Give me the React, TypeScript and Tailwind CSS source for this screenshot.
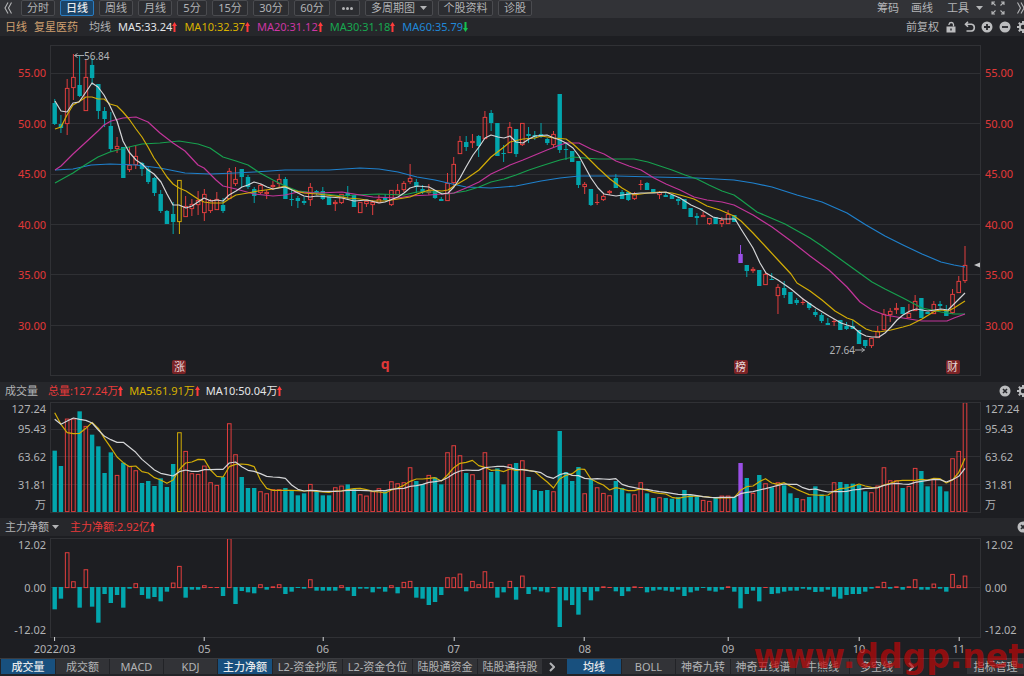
import {useState} from "react";
import clsx from "clsx";

type Kind = "D" | "U" | "Y" | "P";
type Candle = [Kind, number, number, number, number];
type Point = [number, number];

const TEAL = "#02a6ad";
const RED = "#e23e3e";
const YELLOW = "#d2ac06";
const PURPLE = "#9a4fe6";
const WHITE = "#d4d5d7";
const MAGENTA = "#c2359a";
const GREEN = "#17a04e";
const BLUE = "#1f80cc";

const colors: Record<Kind, string> = {D: TEAL, U: RED, Y: YELLOW, P: PURPLE};

// kind, body top, body bottom, high, low
const candles: Candle[] = [
    ["D", 103, 124, 99, 125], ["D", 124, 128, 115, 133], ["U", 88, 124, 79, 135], ["U", 77, 88, 54, 100], ["D", 85, 96, 56, 97],
    ["U", 77, 111, 60, 111], ["D", 65, 78, 58, 85], ["D", 84, 111, 84, 119], ["D", 111, 119, 107, 127], ["D", 126, 149, 112, 152],
    ["U", 146, 149, 137, 153], ["D", 147, 178, 147, 178], ["U", 165, 170, 147, 172], ["U", 156, 165, 146, 169], ["D", 163, 169, 162, 176],
    ["D", 169, 182, 166, 184], ["D", 178, 193, 177, 196], ["D", 194, 211, 190, 213], ["D", 211, 224, 210, 224], ["D", 214, 222, 202, 234],
    ["Y", 180, 222, 180, 234], ["U", 206, 217, 196, 217], ["U", 204, 209, 199, 216], ["U", 200, 205, 191, 215], ["U", 194, 213, 189, 221],
    ["U", 200, 211, 199, 213], ["U", 199, 210, 192, 210], ["D", 205, 211, 198, 213], ["U", 171, 199, 168, 199], ["U", 179, 184, 167, 186],
    ["D", 169, 177, 169, 187], ["D", 177, 187, 175, 189], ["D", 189, 196, 187, 203], ["U", 185, 193, 184, 194], ["U", 192, 194, 190, 199],
    ["U", 185, 187, 181, 190], ["U", 179, 184, 174, 187], ["D", 179, 199, 177, 199], ["D", 199, 200, 190, 206], ["D", 198, 201, 196, 208],
    ["D", 201, 203, 197, 205], ["U", 187, 200, 183, 206], ["D", 191, 193, 190, 195], ["D", 191, 199, 187, 200], ["D", 197, 205, 197, 205],
    ["U", 202, 204, 200, 211], ["U", 194, 203, 194, 204], ["D", 193, 196, 186, 200], ["D", 195, 207, 195, 207], ["U", 202, 213, 202, 213],
    ["U", 201, 204, 201, 207], ["U", 202, 205, 200, 215], ["U", 199, 203, 195, 203], ["D", 197, 200, 194, 201], ["U", 190, 205, 190, 206],
    ["U", 190, 195, 184, 195], ["U", 183, 190, 181, 192], ["U", 178, 182, 164, 184], ["D", 182, 187, 179, 193], ["D", 189, 192, 185, 194],
    ["U", 191, 193, 184, 195], ["D", 191, 198, 191, 199], ["D", 199, 201, 197, 201], ["U", 183, 201, 173, 201], ["U", 164, 183, 157, 187],
    ["U", 141, 154, 136, 154], ["D", 142, 147, 136, 151], ["U", 141, 143, 134, 148], ["D", 136, 146, 135, 157], ["U", 117, 139, 111, 139],
    ["D", 113, 123, 110, 131], ["D", 123, 156, 123, 156], ["D", 153, 154, 145, 162], ["U", 127, 153, 122, 153], ["D", 129, 154, 129, 157],
    ["U", 123, 145, 123, 146], ["D", 134, 136, 127, 143], ["D", 135, 137, 131, 140], ["D", 134, 137, 123, 138], ["D", 139, 143, 138, 145],
    ["U", 134, 145, 131, 147], ["D", 94, 150, 94, 153], ["D", 149, 150, 143, 160], ["D", 151, 162, 151, 162], ["D", 161, 185, 161, 188],
    ["U", 184, 187, 182, 194], ["D", 189, 205, 189, 206], ["U", 202, 203, 194, 205], ["U", 196, 200, 194, 201], ["U", 191, 193, 190, 195],
    ["D", 178, 188, 174, 188], ["D", 192, 199, 190, 199], ["D", 192, 200, 192, 201], ["U", 194, 199, 192, 200], ["U", 184, 185, 180, 190],
    ["D", 183, 190, 182, 190], ["D", 189, 192, 189, 192], ["U", 192, 195, 191, 199], ["D", 195, 197, 192, 197], ["D", 195, 199, 195, 199],
    ["D", 199, 201, 197, 205], ["D", 199, 209, 199, 209], ["D", 208, 217, 208, 217], ["D", 216, 218, 213, 225], ["U", 215, 217, 212, 217],
    ["U", 218, 224, 218, 225], ["D", 217, 224, 217, 224], ["U", 220, 224, 217, 227], ["U", 214, 224, 210, 224], ["D", 215, 222, 215, 222],
    ["P", 254, 263, 245, 263], ["D", 265, 271, 265, 277], ["U", 269, 271, 267, 273], ["D", 270, 286, 270, 286], ["U", 274, 285, 272, 285],
    ["D", 279, 280, 273, 280], ["U", 287, 296, 284, 314], ["D", 288, 295, 281, 298], ["D", 292, 304, 292, 304], ["D", 300, 303, 298, 305],
    ["U", 302, 303, 298, 305], ["D", 303, 308, 303, 310], ["D", 312, 315, 309, 317], ["D", 315, 321, 313, 323], ["D", 323, 325, 318, 325],
    ["U", 321, 322, 319, 326], ["D", 320, 330, 320, 330], ["D", 326, 329, 322, 330], ["D", 326, 329, 320, 329], ["D", 330, 344, 330, 344],
    ["D", 340, 346, 340, 348], ["U", 338, 346, 338, 348], ["U", 331, 338, 326, 338], ["U", 314, 330, 309, 330], ["U", 311, 315, 308, 322],
    ["U", 308, 310, 303, 314], ["D", 307, 314, 307, 314], ["U", 313, 318, 304, 318], ["U", 301, 311, 295, 311], ["D", 298, 318, 298, 318],
    ["D", 312, 314, 312, 314], ["U", 304, 314, 301, 314], ["D", 304, 306, 301, 309], ["D", 311, 316, 305, 316], ["U", 294, 313, 289, 314],
    ["U", 281, 293, 276, 293], ["U", 265, 281, 246, 283],
];

const ma5: Point[] = [[55, 101], [61, 111], [67, 112], [73, 103], [79, 102], [86, 92], [92, 83], [98, 87], [104, 95], [110, 106], [117, 121], [123, 141], [129, 152], [136, 160], [142, 164], [148, 170], [154, 174], [161, 182], [167, 194], [173, 205], [179, 205], [186, 208], [192, 206], [198, 202], [204, 198], [211, 201], [217, 200], [223, 201], [229, 195], [236, 191], [242, 187], [248, 185], [254, 182], [261, 184], [267, 187], [273, 189], [279, 188], [285, 187], [292, 190], [298, 193], [304, 196], [310, 197], [317, 196], [329, 197], [342, 198], [354, 201], [367, 200], [379, 203], [385, 202], [398, 197], [404, 193], [410, 188], [417, 186], [429, 187], [442, 194], [448, 193], [454, 187], [460, 178], [466, 167], [473, 155], [479, 147], [485, 138], [491, 135], [498, 137], [504, 138], [510, 136], [516, 142], [523, 143], [529, 139], [535, 136], [547, 135], [554, 138], [560, 140], [566, 143], [573, 148], [579, 156], [585, 167], [591, 178], [598, 188], [604, 194], [616, 196], [629, 194], [641, 193], [654, 193], [666, 192], [680, 198], [691, 205], [700, 209], [713, 217], [722, 219], [735, 219], [741, 229], [753, 248], [760, 263], [766, 273], [778, 280], [791, 289], [803, 299], [816, 308], [829, 316], [841, 323], [853, 327], [860, 333], [866, 336], [872, 337], [879, 337], [885, 333], [891, 327], [897, 320], [903, 315], [910, 311], [916, 309], [928, 311], [941, 309], [948, 310], [954, 304], [960, 298], [965, 293]];
const ma10: Point[] = [[55, 129], [61, 127], [67, 115], [73, 105], [80, 101], [86, 97], [92, 97], [98, 99], [104, 99], [110, 104], [117, 106], [123, 112], [129, 119], [136, 129], [142, 137], [148, 147], [154, 158], [161, 168], [167, 177], [173, 184], [179, 188], [186, 191], [192, 195], [198, 199], [204, 202], [211, 203], [223, 203], [229, 199], [236, 195], [248, 193], [258, 191], [273, 189], [285, 186], [292, 190], [304, 193], [317, 194], [335, 196], [348, 198], [360, 199], [373, 201], [385, 201], [398, 199], [410, 197], [417, 194], [429, 190], [442, 191], [448, 190], [454, 186], [466, 179], [479, 170], [491, 157], [504, 147], [510, 142], [523, 139], [535, 138], [541, 136], [554, 138], [566, 139], [573, 144], [585, 155], [598, 168], [610, 179], [622, 188], [634, 195], [648, 193], [660, 192], [672, 193], [680, 195], [694, 199], [707, 206], [720, 210], [734, 216], [741, 221], [753, 233], [766, 247], [778, 260], [791, 274], [797, 283], [810, 291], [822, 300], [835, 311], [847, 318], [853, 320], [860, 325], [866, 329], [872, 331], [879, 332], [891, 330], [903, 327], [910, 325], [922, 319], [935, 311], [941, 310], [948, 311], [954, 308], [965, 301]];
const ma20: Point[] = [[55, 170], [61, 166], [73, 154], [85, 143], [98, 131], [104, 125], [111, 121], [123, 118], [136, 117], [148, 122], [160, 133], [173, 143], [185, 151], [198, 165], [204, 168], [216, 180], [223, 186], [236, 189], [254, 194], [273, 196], [285, 195], [298, 192], [317, 193], [342, 192], [354, 194], [373, 197], [398, 198], [410, 196], [429, 195], [442, 194], [454, 193], [466, 188], [479, 182], [491, 174], [504, 168], [510, 165], [523, 160], [535, 155], [547, 150], [560, 145], [566, 143], [579, 143], [591, 149], [604, 154], [616, 161], [629, 166], [641, 170], [654, 178], [666, 184], [680, 190], [694, 197], [707, 200], [722, 202], [734, 205], [753, 215], [772, 227], [791, 241], [810, 256], [829, 270], [847, 287], [860, 302], [872, 310], [885, 315], [903, 318], [922, 321], [947, 321], [954, 318], [965, 314]];
const ma30: Point[] = [[55, 183], [73, 173], [85, 165], [98, 157], [110, 152], [129, 147], [142, 144], [160, 143], [179, 141], [198, 144], [210, 148], [223, 157], [236, 161], [248, 165], [260, 173], [273, 180], [285, 186], [298, 191], [317, 193], [342, 196], [354, 195], [379, 194], [404, 195], [417, 192], [435, 192], [448, 194], [466, 191], [479, 187], [491, 182], [504, 179], [516, 175], [529, 170], [541, 166], [560, 160], [573, 157], [585, 158], [598, 159], [616, 159], [634, 159], [648, 162], [660, 166], [672, 170], [685, 175], [697, 179], [709, 185], [722, 191], [734, 195], [741, 200], [757, 212], [785, 224], [810, 238], [822, 246], [847, 264], [872, 282], [885, 289], [903, 298], [922, 308], [941, 312], [954, 314], [965, 314]];
const ma60: Point[] = [[55, 170], [73, 169], [91, 165], [110, 164], [136, 165], [160, 168], [185, 173], [210, 174], [235, 173], [254, 172], [285, 170], [329, 170], [360, 168], [379, 169], [398, 172], [417, 177], [435, 180], [448, 183], [466, 187], [491, 188], [516, 186], [541, 181], [560, 178], [579, 176], [616, 176], [654, 177], [697, 178], [734, 180], [753, 183], [772, 187], [797, 195], [822, 202], [847, 213], [866, 225], [885, 236], [903, 245], [922, 254], [941, 262], [954, 265], [965, 267]];

// levels in thirds of a unit, measured downwards
const volumes = [
    212, 258, 116, 116, 94, 138, 164, 199, 279, 217, 285, 248, 258, 271, 309, 303, 318, 295, 321, 252, 157, 213, 280, 282, 257, 307, 315, 291, 130, 223,
    291, 324, 324, 334, 340, 328, 328, 324, 330, 346, 340, 312, 334, 346, 346, 322, 317, 313, 327, 343, 347, 334, 325, 334, 304, 310, 307, 262, 303, 312,
    285, 292, 313, 217, 196, 226, 279, 283, 300, 217, 276, 265, 313, 253, 249, 241, 291, 330, 333, 330, 334, 153, 276, 303, 261, 340, 297, 322, 339, 346,
    303, 324, 340, 343, 307, 340, 354, 352, 354, 356, 351, 330, 345, 349, 360, 363, 354, 347, 347, 351, 249, 294, 339, 285, 310, 322, 307, 316, 340, 354,
    358, 351, 319, 343, 348, 307, 306, 312, 311, 315, 334, 337, 317, 262, 301, 301, 324, 318, 264, 273, 319, 297, 319, 334, 235, 213, 67,
];
const volMa5 = [
    98, 133, 158, 161, 160, 145, 127, 145, 176, 203, 231, 248, 260, 258, 275, 279, 293, 300, 310, 300, 268, 249, 246, 238, 239, 270, 289, 291, 260, 253,
    252, 254, 260, 300, 325, 331, 331, 331, 331, 332, 333, 331, 334, 336, 337, 333, 333, 329, 326, 325, 329, 334, 336, 339, 330, 324, 316, 304, 297, 297,
    295, 293, 303, 285, 263, 250, 247, 241, 257, 262, 271, 270, 275, 267, 271, 268, 271, 275, 291, 306, 324, 297, 286, 281, 267, 268, 297, 307, 315, 330,
    323, 327, 332, 332, 326, 331, 337, 340, 342, 352, 355, 351, 349, 348, 350, 351, 354, 354, 354, 352, 331, 320, 318, 305, 296, 309, 313, 308, 319, 328,
    336, 344, 345, 346, 345, 333, 326, 324, 319, 312, 318, 322, 323, 315, 310, 303, 301, 301, 301, 298, 300, 295, 296, 309, 300, 277, 235,
];
const volMa10 = [
    118, 133, 123, 114, 118, 121, 129, 150, 169, 179, 187, 187, 202, 217, 238, 254, 270, 280, 284, 288, 275, 270, 274, 274, 269, 269, 268, 268, 249, 246,
    260, 271, 274, 281, 289, 291, 292, 295, 315, 328, 333, 331, 332, 334, 334, 334, 333, 331, 331, 331, 332, 333, 332, 332, 328, 326, 325, 319, 317, 313,
    307, 305, 302, 293, 281, 273, 270, 271, 271, 263, 261, 259, 259, 263, 268, 269, 272, 274, 278, 290, 295, 284, 279, 286, 287, 295, 297, 296, 297, 298,
    296, 313, 319, 323, 327, 328, 332, 335, 337, 340, 343, 344, 344, 347, 350, 352, 353, 352, 352, 352, 341, 337, 335, 330, 326, 321, 316, 312, 313, 313,
    323, 329, 327, 332, 336, 335, 335, 334, 330, 328, 325, 325, 323, 316, 312, 310, 312, 313, 307, 304, 301, 298, 299, 306, 299, 289, 265,
];
const flows = [
    274, 242, 103, 190, 269, 154, 266, 314, 228, 255, 231, 269, 212, 196, 231, 242, 237, 250, 221, 194, 144, 239, 215, 215, 202, 207, 207, 234, 61, 258,
    219, 223, 226, 199, 215, 205, 199, 228, 221, 209, 212, 184, 218, 218, 218, 218, 202, 218, 234, 212, 212, 223, 212, 221, 202, 226, 192, 189, 239, 242,
    261, 252, 231, 178, 178, 167, 220, 189, 199, 160, 192, 239, 223, 189, 245, 173, 228, 215, 220, 223, 207, 327, 247, 261, 290, 222, 247, 220, 205, 207,
    220, 234, 220, 205, 207, 223, 218, 215, 218, 221, 215, 234, 223, 218, 209, 218, 221, 215, 205, 221, 271, 228, 218, 250, 207, 228, 226, 221, 218, 218,
    212, 215, 222, 221, 215, 236, 242, 231, 228, 228, 221, 212, 205, 192, 212, 205, 215, 205, 184, 215, 215, 197, 212, 221, 168, 202, 173,
];

const months = [
    {label: "2022/03", index: 0},
    {label: "05", index: 24},
    {label: "06", index: 43},
    {label: "07", index: 64},
    {label: "08", index: 85},
    {label: "09", index: 108},
    {label: "10", index: 129},
    {label: "11", index: 145},
];

const badges = [
    {label: "涨", index: 20},
    {label: "榜", index: 110},
    {label: "财", index: 144},
];

const PLOT_LEFT = 50;
const PLOT_WIDTH = 931;
const FLOW_ZERO = 208;

const centerX = (i: number) => 54.7 + i * 6.235;
const percentX = (i: number) => `${((centerX(i) - PLOT_LEFT) / PLOT_WIDTH) * 100}%`;
const volY = (level: number) => 380 + level / 3;
const flowY = (level: number) => 518 + level / 3;
const toPoints = (points: Point[]) => points.map((p) => p.join(",")).join(" ");
const seriesPoints = (levels: number[]) => toPoints(levels.map((v, i): Point => [centerX(i), volY(v)]));

const Line = ({points, color}: { points: string; color: string }) => (
    <polyline points={points} fill="none" stroke={color} strokeWidth="1.2" strokeLinejoin="round"/>
);

const Bar = ({i, top, bottom, color, hollow}: { i: number; top: number; bottom: number; color: string; hollow: boolean }) => {
    const x = centerX(i);
    const height = Math.max(bottom - top, 1);
    if (hollow && height > 1.5) {
        return <rect x={x - 1.8} y={top + 0.4} width="3.6" height={Math.max(height - 0.8, 1)} fill="none" stroke={color} strokeWidth="1"/>;
    }
    return <rect x={x - 2.2} y={top} width="4.4" height={height} fill={color}/>;
};

const GridLines = ({rows}: { rows: number[] }) => (
    <>
        {rows.map((y) => <path key={y} d={`M50 ${y}H981`} stroke="#2f3034" strokeWidth="1"/>)}
    </>
);

const PriceChart = () => (
    <svg viewBox="50 45 931 331" preserveAspectRatio="none" className="block h-full w-full">
        <GridLines rows={[73.5, 123.5, 174.5, 224.5, 274.5, 325.5]}/>
        {candles.map(([kind, top, bottom, high, low], i) => (
            <g key={i}>
                <path
                    d={kind === "U" || kind === "Y" ? `M${centerX(i)} ${high}V${top}M${centerX(i)} ${bottom}V${low}` : `M${centerX(i)} ${high}V${low}`}
                    stroke={colors[kind]} strokeWidth="1"/>
                <Bar i={i} top={top} bottom={bottom} color={colors[kind]} hollow={kind === "U" || kind === "Y"}/>
            </g>
        ))}
        <Line points={toPoints(ma60)} color={BLUE}/>
        <Line points={toPoints(ma30)} color={GREEN}/>
        <Line points={toPoints(ma20)} color={MAGENTA}/>
        <Line points={toPoints(ma10)} color={YELLOW}/>
        <Line points={toPoints(ma5)} color={WHITE}/>
        <path d="M74.500 55.500H84M77.500 53.500L74.500 55.500L77.500 57.500" fill="none" stroke="#a5a6a8"/>
        <path d="M855 350H864.500M861.500 348L864.500 350L861.500 352" fill="none" stroke="#a5a6a8"/>
        <path d="M974 265L980 262.500V267.500Z" fill="#c4c5c7"/>
    </svg>
);

const VolumeChart = () => (
    <svg viewBox="50 402 931 111" preserveAspectRatio="none" className="block h-full w-full">
        <GridLines rows={[429.5, 456.5, 484.5]}/>
        {volumes.map((v, i) => (
            <Bar key={i} i={i} top={volY(v)} bottom={512} color={colors[candles[i][0]]}
                 hollow={candles[i][0] === "U" || candles[i][0] === "Y"}/>
        ))}
        <Line points={seriesPoints(volMa5)} color={YELLOW}/>
        <Line points={seriesPoints(volMa10)} color={WHITE}/>
    </svg>
);

const FlowChart = () => (
    <svg viewBox="50 538 931 100" preserveAspectRatio="none" className="block h-full w-full">
        <GridLines rows={[587.5]}/>
        {flows.map((v, i) => v < FLOW_ZERO
            ? <Bar key={i} i={i} top={flowY(v)} bottom={588} color={RED} hollow={v < 204}/>
            : <Bar key={i} i={i} top={587} bottom={flowY(v)} color={TEAL} hollow={false}/>
        )}
    </svg>
);

const TrendArrow = ({down = false}: { down?: boolean }) => (
    <svg viewBox="0 0 5 10" className={clsx("h-[10px] w-[5px] shrink-0", down ? "rotate-180 text-[#14c24e]" : "text-[#ff3b3b]")}>
        <path d="M2.500 0L5 4H3.500V10H1.500V4H0Z" fill="currentColor"/>
    </svg>
);

const Caret = () => (
    <svg viewBox="0 0 7 4" className="pointer-events-none h-1 w-[7px] shrink-0"><path d="M0 0H7L3.500 4Z" fill="currentColor"/></svg>
);

const Stat = ({text, className, down}: { text: string; className: string; down?: boolean }) => (
    <span className={clsx("flex items-center", className)}>{text}<TrendArrow down={down}/></span>
);

const CloseIcon = () => (
    <svg viewBox="0 0 12 12" className="h-3 w-3 shrink-0">
        <circle cx="6" cy="6" r="5.500" fill="currentColor"/>
        <path d="M4 4L8 8M8 4L4 8" stroke="#26272b" strokeWidth="1.600"/>
    </svg>
);

const GearIcon = () => (
    <svg viewBox="0 0 12 12" className="h-3 w-3 shrink-0">
        <circle cx="6" cy="6" r="3.200" fill="none" stroke="currentColor" strokeWidth="2"/>
        <path d="M6 0V2.500M6 9.500V12M0 6H2.500M9.500 6H12M1.800 1.800L3.500 3.500M8.500 8.500L10.200 10.200M10.200 1.800L8.500 3.500M3.500 8.500L1.800 10.200"
              stroke="currentColor" strokeWidth="2"/>
    </svg>
);

const DoubleChevron = ({flip = false}: { flip?: boolean }) => (
    <svg viewBox="0 0 8 12" className={clsx("h-3 w-2 shrink-0", flip && "rotate-180")}>
        <path d="M4 0.500L1 6L4 11.500M7.500 0.500L4.500 6L7.500 11.500" fill="none" stroke="currentColor" strokeWidth="1.100"/>
    </svg>
);

const ChevronIcon = () => (
    <svg viewBox="0 0 6 10" className="h-[10px] w-[6px]"><path d="M1 1L5 5L1 9" fill="none" stroke="currentColor" strokeWidth="2"/></svg>
);

const Panel = ({children, labels, className}: { children: React.ReactNode; labels: () => React.ReactNode; className: string }) => (
    <div className={clsx("flex", className)}>
        <div className="w-[50px] shrink-0 pr-1 text-right">{labels()}</div>
        <div className="relative min-w-0 flex-1">{children}</div>
        <div className="w-[43px] shrink-0 pl-1">{labels()}</div>
    </div>
);

const PERIODS = [
    {label: "分时", width: "w-[34px]"},
    {label: "日线", width: "w-[34px]"},
    {label: "周线", width: "w-[34px]"},
    {label: "月线", width: "w-[34px]"},
    {label: "5分", width: "w-[30px]"},
    {label: "15分", width: "w-[36px]"},
    {label: "30分", width: "w-[36px]"},
    {label: "60分", width: "w-[36px]"},
];

const INDICATORS = [
    {label: "成交量", width: "w-[54px]"},
    {label: "成交额", width: "w-[53px]"},
    {label: "MACD", width: "w-[53px]"},
    {label: "KDJ", width: "w-[53px]"},
    {label: "主力净额", width: "w-[54px]"},
    {label: "L2-资金抄底", width: "w-[69px]"},
    {label: "L2-资金仓位", width: "w-[69px]"},
    {label: "陆股通资金", width: "w-[64px]"},
    {label: "陆股通持股", width: "w-[64px]"},
];

const OVERLAYS = [
    {label: "均线", width: "w-[54px]"},
    {label: "BOLL", width: "w-[53px]"},
    {label: "神奇九转", width: "w-[54px]"},
    {label: "神奇五线谱", width: "w-[64px]"},
    {label: "牛熊线", width: "w-[53px]"},
    {label: "多空线", width: "w-[53px]"},
];

const toolButton = "flex h-4 shrink-0 items-center justify-center rounded-xs border whitespace-nowrap";
const idleTool = "border-[#4a4b4f] bg-[#2c2d31]";

const Tab = ({label, width, active, onClick}: { label: string; width: string; active: boolean; onClick?: () => void }) => (
    <button onClick={onClick}
            className={clsx("flex h-[15px] shrink-0 items-center justify-center whitespace-nowrap", width, active ? "bg-[#18507e] font-medium text-[#e6e8ea]" : "bg-[#323337]")}>
        {label}
    </button>
);

const App = () => {
    const [period, setPeriod] = useState("日线");
    const [overlay, setOverlay] = useState("均线");
    const [shown, setShown] = useState(["成交量", "主力净额"]);

    const toggleIndicator = (label: string) => {
        setShown(shown.includes(label) ? shown.filter((s) => s !== label) : [...shown, label]);
    };

    return (
        <div className="relative w-full overflow-hidden bg-[#1d1e22] font-['Noto_Sans','Noto_Sans_CJK_SC',sans-serif] text-[11px] leading-4 text-[#b2b3b5]">
            <div className="flex h-[18px] items-start bg-[#323337]">
                <button aria-label="收起" className="flex h-4 w-[21px] items-center pl-1"><DoubleChevron/></button>
                <div className="flex gap-[5px]">
                    {PERIODS.map(({label, width}) => (
                        <button key={label} onClick={() => setPeriod(label)}
                                className={clsx(toolButton, width, period === label ? "border-[#2a7cc0] bg-[#1b4468] font-medium text-[#e6e8ea]" : idleTool)}>
                            {label}
                        </button>
                    ))}
                    <button aria-label="更多" className={clsx(toolButton, idleTool, "w-[25px] gap-px")}>
                        <i className="h-[3px] w-[3px] rounded-full bg-current"/>
                        <i className="h-[3px] w-[3px] rounded-full bg-current"/>
                        <i className="h-[3px] w-[3px] rounded-full bg-current"/>
                    </button>
                    <label className={clsx(toolButton, idleTool, "w-[68px] gap-[5px]")}>
                        <select aria-label="多周期图" className="w-[44px] appearance-none bg-transparent outline-none">
                            <option>多周期图</option>
                        </select>
                        <Caret/>
                    </label>
                    <button className={clsx(toolButton, idleTool, "w-[55px]")}>个股资料</button>
                    <button className={clsx(toolButton, idleTool, "w-[34px]")}>诊股</button>
                </div>
                <div className="ml-auto flex h-4 items-center text-[#b4b5b7]">
                    <button className="mr-3">筹码</button>
                    <button className="mr-[14px]">画线</button>
                    <button className="mr-2 flex items-center gap-[7px]">工具<Caret/></button>
                    <button aria-label="全屏" className="mr-3">
                        <svg viewBox="0 0 14 14" className="h-[14px] w-[14px]" fill="none" stroke="currentColor" strokeWidth="1.100">
                            <path d="M1 4V1H4M1 1L4.500 4.500M10 1H13V4M13 1L9.500 4.500M1 10V13H4M1 13L4.500 9.500M13 10V13H10M13 13L9.500 9.500"/>
                        </svg>
                    </button>
                    <button aria-label="展开" className="flex w-[7px] overflow-hidden"><DoubleChevron flip/></button>
                </div>
            </div>

            <div className="flex h-[18px] items-center bg-[#26272b] pl-[5px]">
                <span className="mr-[7px] text-[#d0a070]">日线</span>
                <span className="mr-[11px] text-[#d0a070]">复星医药</span>
                <span className="mr-[7px]">均线</span>
                <div className="flex gap-[7px]">
                    <Stat text="MA5:33.24" className="text-[#e4e5e7]"/>
                    <Stat text="MA10:32.37" className="text-[#d9b200]"/>
                    <Stat text="MA20:31.12" className="text-[#cc36a4]"/>
                    <Stat text="MA30:31.18" className="text-[#17a850]"/>
                    <Stat text="MA60:35.79" className="text-[#2088d8]" down/>
                </div>
                <div className="ml-auto flex items-center text-[#bcbdbf]">
                    <button className="mr-[7px] text-[#b2b3b5]">前复权</button>
                    <button aria-label="锁定" className="mr-2">
                        <svg viewBox="0 0 10 12" className="h-3 w-[10px]">
                            <path d="M0.500 5.500H9.500V11.500H0.500Z" fill="currentColor"/>
                            <path d="M3 4V3.300A2.300 2.300 0 0 1 7.500 3.300V5.500" fill="none" stroke="currentColor" strokeWidth="1.300"/>
                            <path d="M4.300 7.500H5.700V9.500H4.300Z" fill="#26272b"/>
                        </svg>
                    </button>
                    <button aria-label="撤销" className="mr-[5px]">
                        <svg viewBox="0 0 12 12" className="h-3 w-3" fill="none" stroke="currentColor" strokeWidth="1.600">
                            <path d="M4 0.800L1.500 3.300L4 5.800M1.500 3.300H7.500A3.400 3.400 0 0 1 7.500 10H2.500"/>
                        </svg>
                    </button>
                    <button aria-label="放大" className="mr-[6px]">
                        <svg viewBox="0 0 12 12" className="h-3 w-3">
                            <circle cx="6" cy="6" r="5.500" fill="currentColor"/>
                            <path d="M6 3V9M3 6H9" stroke="#26272b" strokeWidth="1.800"/>
                        </svg>
                    </button>
                    <button aria-label="缩小" className="mr-[6px]">
                        <svg viewBox="0 0 12 12" className="h-3 w-3">
                            <circle cx="6" cy="6" r="5.500" fill="currentColor"/>
                            <path d="M3 6H9" stroke="#26272b" strokeWidth="1.800"/>
                        </svg>
                    </button>
                    <button aria-label="设置" className="flex w-[7px] overflow-hidden"><GearIcon/></button>
                </div>
            </div>

            <Panel className="pt-[9px] pb-[6px]" labels={() => (
                <div className="flex h-[289px] flex-col justify-between pt-5 text-[#e23838]">
                    {["55.00", "50.00", "45.00", "40.00", "35.00", "30.00"].map((p) => <span key={p}>{p}</span>)}
                </div>
            )}>
                <div className="h-[331px] outline -outline-offset-1 outline-[#303135]"><PriceChart/></div>
                <span className="absolute top-[3px] left-[34px] text-[10px]">56.84</span>
                <span className="absolute top-[297px] right-[126px] text-[10px]">27.64</span>
                {badges.map(({label, index}) => (
                    <span key={label} style={{left: percentX(index)}}
                          className="absolute bottom-[2px] flex h-[14px] w-[14px] -translate-x-1/2 items-center justify-center rounded-xs bg-[#7b2326] text-[#e8d8d8]">
                        {label}
                    </span>
                ))}
                <span style={{left: percentX(53)}} className="absolute bottom-1 -translate-x-1/2 text-[14px] font-bold text-[#e03838]">q</span>
            </Panel>

            <div className="flex h-[18px] items-center bg-[#26272b] pl-[5px]">
                <span className="mr-[10px]">成交量</span>
                <div className="flex gap-[6px]">
                    <Stat text="总量:127.24万" className="text-[#e83a3a]"/>
                    <Stat text="MA5:61.91万" className="text-[#d9b200]"/>
                    <Stat text="MA10:50.04万" className="text-[#e4e5e7]"/>
                </div>
                <div className="ml-auto flex items-center gap-[6px] text-[#bcbdbf]">
                    <button aria-label="关闭成交量"><CloseIcon/></button>
                    <button aria-label="成交量设置" className="flex w-[7px] overflow-hidden"><GearIcon/></button>
                </div>
            </div>

            <Panel className="pt-[2px] pb-[5px]" labels={() => (
                <div className="-mt-px flex flex-col">
                    <span>127.24</span>
                    <span className="mt-1">95.43</span>
                    <span className="mt-3">63.62</span>
                    <span className="mt-3">31.81</span>
                    <span className="mt-1">万</span>
                </div>
            )}>
                <div className="h-[111px] outline -outline-offset-1 outline-[#303135]"><VolumeChart/></div>
            </Panel>

            <div className="flex h-[18px] items-center bg-[#26272b] pl-[5px]">
                <label className="mr-[11px] flex items-center gap-[3px]">
                    <select aria-label="指标" className="w-[44px] appearance-none bg-transparent outline-none">
                        <option>主力净额</option>
                    </select>
                    <Caret/>
                </label>
                <Stat text="主力净额:2.92亿" className="text-[#e83a3a]"/>
                <button aria-label="关闭主力净额" className="ml-auto flex w-[7px] overflow-hidden text-[#bcbdbf]"><CloseIcon/></button>
            </div>

            <Panel className="pt-[2px]" labels={() => (
                <div className="-mt-px flex h-[101px] flex-col justify-between">
                    <span>12.02</span>
                    <span>0.00</span>
                    <span>-12.02</span>
                </div>
            )}>
                <div className="h-[100px] outline -outline-offset-1 outline-[#303135]"><FlowChart/></div>
                <div className="h-5">
                    {months.map(({label, index}) => (
                        <div key={label} style={{left: percentX(index)}} className="absolute top-[99px] flex -translate-x-1/2 flex-col items-center">
                            <i className="h-1 w-px bg-[#d4d5d7]"/>
                            <span>{label}</span>
                        </div>
                    ))}
                </div>
            </Panel>

            <div className="flex h-[18px] items-start border-t border-[#3a3b3f] bg-[#222327] pl-px">
                <div className="flex gap-px">
                    {INDICATORS.map((tab) => (
                        <Tab key={tab.label} {...tab} active={shown.includes(tab.label)} onClick={() => toggleIndicator(tab.label)}/>
                    ))}
                </div>
                <button aria-label="更多指标" className="flex h-[15px] w-[25px] items-center pl-[7px]"><ChevronIcon/></button>
                <div className="flex gap-px">
                    {OVERLAYS.map((tab) => (
                        <Tab key={tab.label} {...tab} active={overlay === tab.label} onClick={() => setOverlay(tab.label)}/>
                    ))}
                </div>
                <button aria-label="更多均线" className="flex h-[15px] w-4 items-center pl-[5px]"><ChevronIcon/></button>
                <button className="ml-auto h-[15px] w-[57px] bg-[#323337] leading-[15px] whitespace-nowrap">指标管理</button>
            </div>

            <div className="pointer-events-none absolute right-0 bottom-0 font-['DejaVu_Sans',sans-serif] text-[33px] leading-[38px] font-bold text-[#c00808]/70">
                www.ddgp.net
            </div>
        </div>
    );
};

export default App;
